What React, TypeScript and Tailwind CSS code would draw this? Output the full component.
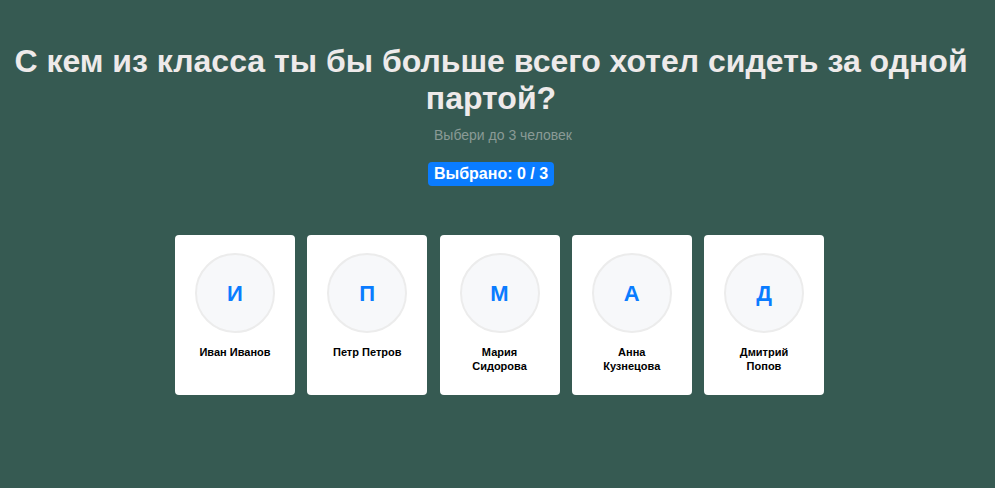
import React from "react";

const people = [
  { l: "И", n: "Иван Иванов" },
  { l: "П", n: "Петр Петров" },
  { l: "М", n: "Мария Сидорова" },
  { l: "А", n: "Анна Кузнецова" },
  { l: "Д", n: "Дмитрий Попов" },
];

export default function App() {
  return (
    <div
      className="min-h-[488px] w-full bg-[#365a52] flex flex-col items-center pt-[43px] px-[12px]"
      style={{ fontFamily: '"Liberation Sans", Arial, sans-serif' }}
    >
      <h1 className="mr-[13px] text-[32px] leading-[37px] font-bold text-[#eeeaea] text-center">
        С кем из класса ты бы больше всего хотел сидеть за одной партой?
      </h1>
      <p className="mt-[9px] ml-[11px] text-[14px] leading-[18px] text-[#8a9a96]">Выбери до 3 человек</p>
      <div className="mt-[18px] mr-[13px] bg-[#0a7cff] text-white font-bold text-[16px] leading-[24px] px-[6px] rounded-[4px]">
        Выбрано: 0 / 3
      </div>
      <div className="mt-[49px] flex gap-[12.25px] ml-[4px]">
        {people.map((p) => (
          <div
            key={p.n}
            className="w-[120px] h-[160px] bg-white rounded-[4px] flex flex-col items-center pt-[18px]"
          >
            <div className="w-[80px] h-[80px] rounded-full bg-[#f7f8fa] border-2 border-[#ececec] flex items-center justify-center text-[#0a7cff] font-bold text-[22px]">
              {p.l}
            </div>
            <div className="mt-[12px] w-[80px] text-center text-[11px] leading-[14px] font-bold text-black">
              {p.n}
            </div>
          </div>
        ))}
      </div>
    </div>
  );
}
